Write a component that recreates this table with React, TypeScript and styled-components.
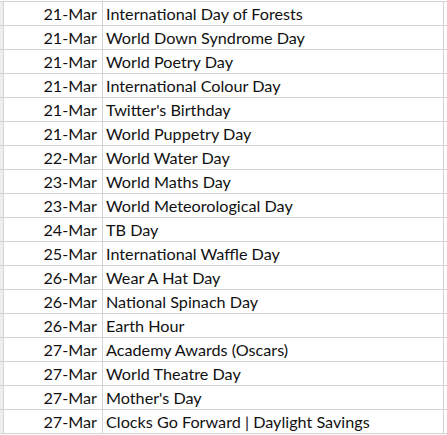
import styled, { createGlobalStyle } from 'styled-components';

const GlobalStyle = createGlobalStyle`
  html, body {
    margin: 0;
    padding: 0;
    background: #ffffff;
  }
`;

const Sheet = styled.div`
  padding-top: 1px;
  font-family: Lato, "Liberation Sans", sans-serif;
  font-size: 16.2px;
  color: #111;
`;

const Row = styled.div`
  display: grid;
  grid-template-columns: 4px 99px 341px;
  height: 24px;
  box-sizing: border-box;
  border-top: 1px solid #d4d4d4;

  &:last-child {
    height: 25px;
    border-bottom: 1px solid #d4d4d4;
  }
`;

const Gutter = styled.div`
  background: #eeeeee;
  border-right: 1px solid #d4d4d4;
`;

const Cell = styled.div<{ $align?: 'left' | 'right' }>`
  border-right: 1px solid #d4d4d4;
  line-height: 23px;
  white-space: nowrap;
  text-align: ${(p) => p.$align ?? 'left'};
  padding: ${(p) => (p.$align === 'right' ? '0 5px 0 0' : '0 0 0 3px')};
`;

const days: [string, string][] = [
  ['21-Mar', 'International Day of Forests'],
  ['21-Mar', 'World Down Syndrome Day'],
  ['21-Mar', 'World Poetry Day'],
  ['21-Mar', 'International Colour Day'],
  ['21-Mar', "Twitter's Birthday"],
  ['21-Mar', 'World Puppetry Day'],
  ['22-Mar', 'World Water Day'],
  ['23-Mar', 'World Maths Day'],
  ['23-Mar', 'World Meteorological Day'],
  ['24-Mar', 'TB Day'],
  ['25-Mar', 'International Waffle Day'],
  ['26-Mar', 'Wear A Hat Day'],
  ['26-Mar', 'National Spinach Day'],
  ['26-Mar', 'Earth Hour'],
  ['27-Mar', 'Academy Awards (Oscars)'],
  ['27-Mar', 'World Theatre Day'],
  ['27-Mar', "Mother's Day"],
  ['27-Mar', 'Clocks Go Forward | Daylight Savings'],
];

export default function App() {
  return (
    <>
      <GlobalStyle />
      <Sheet>
        {days.map(([date, name], i) => (
          <Row key={i}>
            <Gutter />
            <Cell $align="right">{date}</Cell>
            <Cell>{name}</Cell>
          </Row>
        ))}
      </Sheet>
    </>
  );
}
